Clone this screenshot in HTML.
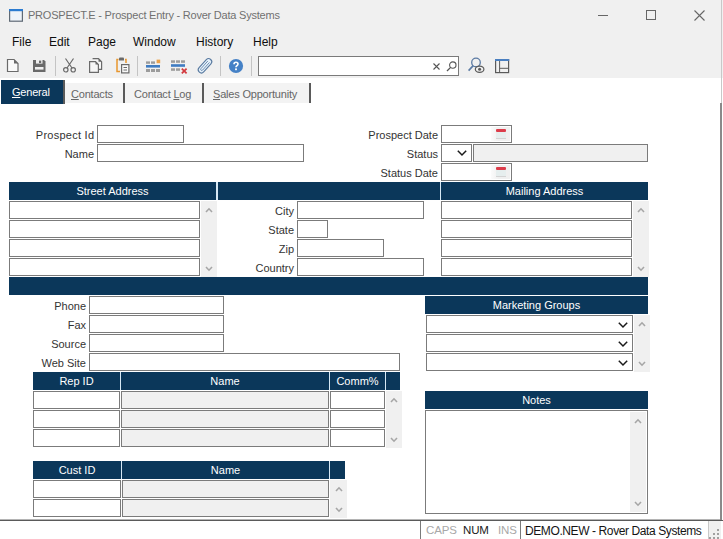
<!DOCTYPE html>
<html><head><meta charset="utf-8">
<style>
*{margin:0;padding:0;box-sizing:border-box}
html,body{width:723px;height:539px;overflow:hidden;background:#fff;font-family:"Liberation Sans",sans-serif;position:relative}
.a{position:absolute}
.t{position:absolute;white-space:nowrap;line-height:1}
.menu{font-size:12px;color:#0e0e0e;top:36px}
.sep{position:absolute;width:1px;background:#c4c4c4;top:56px;height:20px}
.tab{position:absolute;top:83px;height:20px;background:#f3f3f3}
.tabt{position:absolute;top:89px;font-size:11px;color:#666;letter-spacing:-0.2px;white-space:nowrap;line-height:1}
.tdiv{position:absolute;width:2px;background:#5a5a5a;top:83px;height:20px}
.u{text-decoration:underline;text-underline-offset:1px}
.in{position:absolute;border:1px solid #7b7b7b;background:#fff;height:18px}
.g{background:#f0f0f0}
.hd{position:absolute;background:#0b375a;height:18px;color:#fff;font-size:11px;text-align:center;line-height:18px;white-space:nowrap}
.lb{position:absolute;font-size:11px;color:#333;text-align:right;white-space:nowrap;line-height:1}
.sb{position:absolute;background:#f0f0f0}
svg{position:absolute;overflow:visible}
</style></head><body>

<div class="a" style="left:0;top:0;width:723px;height:78px;background:#f0f0f0"></div>
<svg style="left:9px;top:9px" width="14" height="13" viewBox="0 0 14 13"><rect x="0.6" y="0.6" width="12.8" height="11.6" fill="#eef3f9" stroke="#5f6a75" stroke-width="1.2"/><rect x="0" y="0" width="14" height="2.2" fill="#2b7bd0"/></svg>
<div class="t" style="left:28px;top:10px;font-size:11px;letter-spacing:-0.22px;color:#707070">PROSPECT.E - Prospect Entry - Rover Data Systems</div>
<div class="a" style="left:598px;top:15px;width:10px;height:1px;background:#666"></div>
<div class="a" style="left:646px;top:10px;width:10px;height:10px;border:1px solid #666"></div>
<svg style="left:694px;top:10px" width="11" height="11" viewBox="0 0 11 11"><path d="M0.5 0.5L10.5 10.5M10.5 0.5L0.5 10.5" stroke="#666" stroke-width="1.1"/></svg>
<div class="t menu" style="left:12px">File</div>
<div class="t menu" style="left:49px">Edit</div>
<div class="t menu" style="left:88px">Page</div>
<div class="t menu" style="left:133px">Window</div>
<div class="t menu" style="left:196px">History</div>
<div class="t menu" style="left:253px">Help</div>
<svg style="left:6px;top:58px" width="13" height="15" viewBox="0 0 13 15"><path d="M1.5 1.5H8L12 5.5V13.5H1.5Z" fill="#fafafa" stroke="#6a6a6a" stroke-width="1.2"/><path d="M8 1.5V5.5H12Z" fill="#6a6a6a"/></svg>
<svg style="left:33px;top:60px" width="13" height="12" viewBox="0 0 13 12"><path d="M0 0H11L12.5 1.5V12H0Z" fill="#6a6a6a"/><rect x="3" y="0" width="6.5" height="3.6" fill="#f0f0f0"/><rect x="6" y="0.6" width="2.2" height="2.4" fill="#6a6a6a"/><rect x="2" y="7" width="8.5" height="2.6" fill="#f0f0f0"/></svg>
<div class="sep" style="left:55px"></div>
<svg style="left:62px;top:58px" width="15" height="15" viewBox="0 0 15 15"><path d="M3.5 0.5L10 10M11.5 0.5L5 10" stroke="#6a6a6a" stroke-width="1.2" fill="none"/><circle cx="3.8" cy="11.8" r="2.2" fill="none" stroke="#6a6a6a" stroke-width="1.2"/><circle cx="11.2" cy="11.8" r="2.2" fill="none" stroke="#6a6a6a" stroke-width="1.2"/></svg>
<svg style="left:88px;top:57px" width="15" height="17" viewBox="0 0 15 17"><path d="M4.6 1.6H10.5L13.6 4.7V12.4H10.4" fill="#f6f6f6" stroke="#6a6a6a" stroke-width="1.2"/><path d="M10.5 1.6V4.7H13.6Z" fill="#6a6a6a"/><path d="M1.6 4.6H7.5L10.4 7.5V15.4H1.6Z" fill="#f6f6f6" stroke="#6a6a6a" stroke-width="1.2"/><path d="M7.5 4.6V7.5H10.4Z" fill="#6a6a6a"/></svg>
<svg style="left:115px;top:57px" width="15" height="17" viewBox="0 0 15 17"><path d="M3.5 2.5H2V14.5H5" fill="none" stroke="#e8962e" stroke-width="1.5"/><path d="M10 2.5H11V6" fill="none" stroke="#e8962e" stroke-width="1.5"/><path d="M4 3.6V1.6Q4 0.6 5 0.6H8Q9 0.6 9 1.6V3.6Z" fill="#6a6a6a"/><rect x="6.6" y="7.6" width="7.3" height="8.3" fill="#fafafa" stroke="#6a6a6a" stroke-width="1.2"/><path d="M8.5 10.5H12M8.5 13H12" stroke="#6a6a6a" stroke-width="1.1"/></svg>
<div class="sep" style="left:137px"></div>
<svg style="left:146px;top:59px" width="15" height="14" viewBox="0 0 15 14"><rect x="0" y="2.4" width="4" height="2.4" fill="#9c9c9c"/><rect x="5" y="2.4" width="4" height="2.4" fill="#9c9c9c"/><rect x="10.6" y="0.6" width="3.6" height="3.6" fill="#eba24a"/><rect x="0" y="6" width="14" height="2.6" fill="#3f7cc2"/><rect x="0" y="10" width="4" height="3" fill="#9c9c9c"/><rect x="5" y="10" width="4" height="3" fill="#9c9c9c"/><rect x="10" y="10" width="4" height="3" fill="#9c9c9c"/></svg>
<svg style="left:171px;top:60px" width="17" height="14" viewBox="0 0 17 14"><rect x="0" y="0.3" width="4" height="2.5" fill="#9c9c9c"/><rect x="5" y="0.3" width="4" height="2.5" fill="#9c9c9c"/><rect x="10" y="0.3" width="4" height="2.5" fill="#9c9c9c"/><rect x="0" y="4.2" width="14" height="2.6" fill="#3f7cc2"/><rect x="0" y="8.3" width="4" height="2.5" fill="#9c9c9c"/><rect x="5" y="8.3" width="4" height="2.5" fill="#9c9c9c"/><path d="M10.8 8.6L15.6 13.4M15.6 8.6L10.8 13.4" stroke="#d23a3f" stroke-width="1.7"/></svg>
<svg style="left:194px;top:54px" width="24" height="24" viewBox="0 0 24 24"><g transform="rotate(-48 11 11.8)"><rect x="2.5" y="8.7" width="17" height="6.2" rx="3.1" fill="#e6f1fa" stroke="#58799f" stroke-width="1.1"/><path d="M16.5 10.7H6.2A1.1 1.1 0 0 0 6.2 12.9H16.5" fill="none" stroke="#6a8bb0" stroke-width="0.9"/></g></svg>
<div class="sep" style="left:220px"></div>
<svg style="left:228px;top:58px" width="16" height="16" viewBox="0 0 16 16"><circle cx="8" cy="8" r="7.1" fill="#4581c6"/><path d="M6 6.3Q6 4.3 8 4.3Q10 4.3 10 6.1Q10 7.1 8.9 7.7Q8 8.2 8 9.3" fill="none" stroke="#fff" stroke-width="1.6"/><rect x="7.1" y="10.4" width="1.8" height="1.8" fill="#fff"/></svg>
<div class="sep" style="left:251px"></div>
<div class="a" style="left:258px;top:56px;width:201px;height:20px;border:1px solid #7a7a7a;background:#fff"></div>
<svg style="left:433px;top:63px" width="7" height="7" viewBox="0 0 7 7"><path d="M0.5 0.5L6.5 6.5M6.5 0.5L0.5 6.5" stroke="#555" stroke-width="1.1"/></svg>
<svg style="left:446px;top:61px" width="11" height="11" viewBox="0 0 11 11"><circle cx="6.8" cy="4.1" r="3.2" fill="none" stroke="#555" stroke-width="1.1"/><path d="M4.6 6.4L1 10" stroke="#555" stroke-width="1.3"/></svg>
<svg style="left:467px;top:56px" width="19" height="18" viewBox="0 0 19 18"><circle cx="9" cy="6.4" r="4.3" fill="none" stroke="#5b7aa3" stroke-width="1.3"/><path d="M6.2 9.6L1.6 14.6" stroke="#5b7aa3" stroke-width="1.6"/><ellipse cx="12.6" cy="13.3" rx="4.3" ry="3.1" fill="#f0f0f0" stroke="#5a5a5a" stroke-width="1.2"/><circle cx="12.6" cy="13.3" r="1.5" fill="#5a5a5a"/></svg>
<svg style="left:494px;top:58px" width="16" height="16" viewBox="0 0 16 16"><rect x="1.6" y="1.6" width="13" height="13" fill="none" stroke="#5a5a5a" stroke-width="1.2"/><rect x="1" y="1" width="14.2" height="2" fill="#4a7fc0"/><path d="M5.6 3V14.5M5.6 10.3H14.5" stroke="#5a5a5a" stroke-width="1"/></svg>
<div class="a" style="left:1px;top:80px;width:62px;height:24px;background:#0b375a"></div>
<div class="tabt" style="left:12px;color:#fff;top:87px"><span class="u">G</span>eneral</div>
<div class="tdiv" style="left:63px;top:80px;height:24px"></div>
<div class="tab" style="left:65px;width:58px"></div>
<div class="tabt" style="left:71px"><span class="u">C</span>ontacts</div>
<div class="tdiv" style="left:123px"></div>
<div class="tab" style="left:125px;width:78px"></div>
<div class="tabt" style="left:134px">Contact <span class="u">L</span>og</div>
<div class="tdiv" style="left:202px"></div>
<div class="tab" style="left:204px;width:106px"></div>
<div class="tabt" style="left:213px"><span class="u">S</span>ales Opportunity</div>
<div class="tdiv" style="left:309px"></div>
<div class="a" style="left:721px;top:0;width:1px;height:103px;background:#c8c8c8"></div>
<div class="a" style="left:720px;top:103px;width:2px;height:417px;background:#8a8a8a"></div>
<div class="lb" style="right:629px;top:130px"><span style="letter-spacing:0.25px">Prospect I</span>d</div>
<div class="in " style="left:97px;top:125px;width:87px;height:18px"></div>
<div class="lb" style="right:629px;top:149px">Name</div>
<div class="in " style="left:97px;top:144px;width:207px;height:18px"></div>
<div class="lb" style="right:285px;top:130px">Prospect Date</div>
<div class="in " style="left:441px;top:125px;width:71px;height:18px"></div>
<div class="a" style="left:491px;top:127px;width:19px;height:14px;background:linear-gradient(to right,#fbfbfb,#f0f0f0 40%)"></div>
<div class="a" style="left:496px;top:129px;width:10px;height:3px;background:#dc3c4a;border-radius:1px"></div>
<div class="a" style="left:496px;top:132px;width:10px;height:7px;background:#e6eeee;border-bottom:1px solid #d4d4d4"></div>
<div class="lb" style="right:285px;top:149px">Status</div>
<div class="in " style="left:441px;top:144px;width:31px;height:18px"></div>
<svg style="left:457px;top:150px" width="10" height="6" viewBox="0 0 10 6"><path d="M0.8 0.8L5 5L9.2 0.8" fill="none" stroke="#1a1a1a" stroke-width="1.5"/></svg>
<div class="in g" style="left:473px;top:144px;width:175px;height:18px"></div>
<div class="lb" style="right:285px;top:168px">Status Date</div>
<div class="in " style="left:441px;top:163px;width:71px;height:18px"></div>
<div class="a" style="left:491px;top:165px;width:19px;height:14px;background:linear-gradient(to right,#fbfbfb,#f0f0f0 40%)"></div>
<div class="a" style="left:496px;top:167px;width:10px;height:3px;background:#dc3c4a;border-radius:1px"></div>
<div class="a" style="left:496px;top:170px;width:10px;height:7px;background:#e6eeee;border-bottom:1px solid #d4d4d4"></div>
<div class="a" style="left:216px;top:182px;width:2px;height:18px;background:#d6e8f5"></div>
<div class="a" style="left:440px;top:182px;width:1px;height:18px;background:#d6e8f5"></div>
<div class="hd" style="left:9px;top:182px;width:207px">Street Address</div>
<div class="hd" style="left:218px;top:182px;width:222px"></div>
<div class="hd" style="left:441px;top:182px;width:207px">Mailing Address</div>
<div class="in " style="left:9px;top:201px;width:191px;height:18px"></div>
<div class="in " style="left:9px;top:220px;width:191px;height:18px"></div>
<div class="in " style="left:9px;top:239px;width:191px;height:18px"></div>
<div class="in " style="left:9px;top:258px;width:191px;height:18px"></div>
<div class="sb" style="left:201px;top:201px;width:16px;height:76px"></div>
<svg style="left:205.0px;top:207px" width="8" height="6" viewBox="0 0 8 6"><path d="M1 5L4 1.8L7 5" fill="none" stroke="#a6a6a6" stroke-width="1.6"/></svg>
<svg style="left:205.0px;top:266px" width="8" height="6" viewBox="0 0 8 6"><path d="M1 1L4 4.2L7 1" fill="none" stroke="#a6a6a6" stroke-width="1.6"/></svg>
<div class="lb" style="right:429px;top:206px">City</div>
<div class="in " style="left:297px;top:201px;width:127px;height:18px"></div>
<div class="lb" style="right:429px;top:225px">State</div>
<div class="in " style="left:297px;top:220px;width:31px;height:18px"></div>
<div class="lb" style="right:429px;top:244px">Zip</div>
<div class="in " style="left:297px;top:239px;width:87px;height:18px"></div>
<div class="lb" style="right:429px;top:263px">Country</div>
<div class="in " style="left:297px;top:258px;width:127px;height:18px"></div>
<div class="in " style="left:441px;top:201px;width:191px;height:18px"></div>
<div class="in " style="left:441px;top:220px;width:191px;height:18px"></div>
<div class="in " style="left:441px;top:239px;width:191px;height:18px"></div>
<div class="in " style="left:441px;top:258px;width:191px;height:18px"></div>
<div class="sb" style="left:633px;top:201px;width:16px;height:76px"></div>
<svg style="left:637.0px;top:207px" width="8" height="6" viewBox="0 0 8 6"><path d="M1 5L4 1.8L7 5" fill="none" stroke="#a6a6a6" stroke-width="1.6"/></svg>
<svg style="left:637.0px;top:266px" width="8" height="6" viewBox="0 0 8 6"><path d="M1 1L4 4.2L7 1" fill="none" stroke="#a6a6a6" stroke-width="1.6"/></svg>
<div class="hd" style="left:9px;top:277px;width:639px"></div>
<div class="lb" style="right:637px;top:301px">Phone</div>
<div class="in " style="left:89px;top:296px;width:135px;height:18px"></div>
<div class="lb" style="right:637px;top:320px">Fax</div>
<div class="in " style="left:89px;top:315px;width:135px;height:18px"></div>
<div class="lb" style="right:637px;top:339px">Source</div>
<div class="in " style="left:89px;top:334px;width:135px;height:18px"></div>
<div class="lb" style="right:637px;top:358px">Web Site</div>
<div class="in " style="left:89px;top:353px;width:311px;height:18px"></div>
<div class="a" style="left:33px;top:372px;width:367px;height:18px;background:#d6e8f5"></div>
<div class="hd" style="left:33px;top:372px;width:87px">Rep ID</div>
<div class="hd" style="left:121px;top:372px;width:208px">Name</div>
<div class="hd" style="left:330px;top:372px;width:55px">Comm%</div>
<div class="hd" style="left:386px;top:372px;width:14px"></div>
<div class="in " style="left:33px;top:391px;width:87px;height:18px"></div>
<div class="in g" style="left:121px;top:391px;width:208px;height:18px"></div>
<div class="in " style="left:330px;top:391px;width:55px;height:18px"></div>
<div class="in " style="left:33px;top:410px;width:87px;height:18px"></div>
<div class="in g" style="left:121px;top:410px;width:208px;height:18px"></div>
<div class="in " style="left:330px;top:410px;width:55px;height:18px"></div>
<div class="in " style="left:33px;top:429px;width:87px;height:18px"></div>
<div class="in g" style="left:121px;top:429px;width:208px;height:18px"></div>
<div class="in " style="left:330px;top:429px;width:55px;height:18px"></div>
<div class="sb" style="left:386px;top:391px;width:16px;height:57px"></div>
<svg style="left:390.0px;top:397px" width="8" height="6" viewBox="0 0 8 6"><path d="M1 5L4 1.8L7 5" fill="none" stroke="#a6a6a6" stroke-width="1.6"/></svg>
<svg style="left:390.0px;top:437px" width="8" height="6" viewBox="0 0 8 6"><path d="M1 1L4 4.2L7 1" fill="none" stroke="#a6a6a6" stroke-width="1.6"/></svg>
<div class="hd" style="left:425px;top:296px;width:223px">Marketing Groups</div>
<div class="in " style="left:426px;top:315px;width:207px;height:18px"></div>
<svg style="left:618px;top:322px" width="10" height="6" viewBox="0 0 10 6"><path d="M0.8 0.8L5 5L9.2 0.8" fill="none" stroke="#1a1a1a" stroke-width="1.5"/></svg>
<div class="in " style="left:426px;top:334px;width:207px;height:18px"></div>
<svg style="left:618px;top:341px" width="10" height="6" viewBox="0 0 10 6"><path d="M0.8 0.8L5 5L9.2 0.8" fill="none" stroke="#1a1a1a" stroke-width="1.5"/></svg>
<div class="in " style="left:426px;top:353px;width:207px;height:18px"></div>
<svg style="left:618px;top:360px" width="10" height="6" viewBox="0 0 10 6"><path d="M0.8 0.8L5 5L9.2 0.8" fill="none" stroke="#1a1a1a" stroke-width="1.5"/></svg>
<div class="sb" style="left:634px;top:315px;width:16px;height:57px"></div>
<svg style="left:638.0px;top:321px" width="8" height="6" viewBox="0 0 8 6"><path d="M1 5L4 1.8L7 5" fill="none" stroke="#a6a6a6" stroke-width="1.6"/></svg>
<svg style="left:638.0px;top:361px" width="8" height="6" viewBox="0 0 8 6"><path d="M1 1L4 4.2L7 1" fill="none" stroke="#a6a6a6" stroke-width="1.6"/></svg>
<div class="hd" style="left:425px;top:391px;width:223px">Notes</div>
<div class="in " style="left:425px;top:410px;width:223px;height:104px"></div>
<div class="sb" style="left:630px;top:412px;width:16px;height:100px"></div>
<svg style="left:634.0px;top:418px" width="8" height="6" viewBox="0 0 8 6"><path d="M1 5L4 1.8L7 5" fill="none" stroke="#a6a6a6" stroke-width="1.6"/></svg>
<svg style="left:634.0px;top:501px" width="8" height="6" viewBox="0 0 8 6"><path d="M1 1L4 4.2L7 1" fill="none" stroke="#a6a6a6" stroke-width="1.6"/></svg>
<div class="a" style="left:33px;top:461px;width:312px;height:18px;background:#d6e8f5"></div>
<div class="hd" style="left:33px;top:461px;width:88px">Cust ID</div>
<div class="hd" style="left:122px;top:461px;width:207px">Name</div>
<div class="hd" style="left:330px;top:461px;width:15px"></div>
<div class="in " style="left:33px;top:480px;width:88px;height:18px"></div>
<div class="in g" style="left:122px;top:480px;width:207px;height:18px"></div>
<div class="in " style="left:33px;top:499px;width:88px;height:18px"></div>
<div class="in g" style="left:122px;top:499px;width:207px;height:18px"></div>
<div class="sb" style="left:330px;top:480px;width:17px;height:38px"></div>
<svg style="left:334.5px;top:486px" width="8" height="6" viewBox="0 0 8 6"><path d="M1 5L4 1.8L7 5" fill="none" stroke="#a6a6a6" stroke-width="1.6"/></svg>
<svg style="left:334.5px;top:507px" width="8" height="6" viewBox="0 0 8 6"><path d="M1 1L4 4.2L7 1" fill="none" stroke="#a6a6a6" stroke-width="1.6"/></svg>
<div class="a" style="left:0;top:519px;width:720px;height:1px;background:#b4b4b4"></div>
<div class="a" style="left:0;top:520px;width:723px;height:19px;background:#fff;border-top:1px solid #5a5a5a"></div>
<div class="a" style="left:708px;top:521px;width:13px;height:18px;background:#f0f0f0"></div>
<div class="a" style="left:420px;top:521px;width:1px;height:18px;background:#7a7a7a"></div>
<div class="t" style="left:426px;font-size:11.5px;letter-spacing:-0.15px;top:525px;color:#a8a8a8">CAPS</div>
<div class="t" style="left:463px;font-size:11.5px;letter-spacing:-0.15px;top:525px;color:#1a1a1a">NUM</div>
<div class="t" style="left:498px;font-size:11.5px;letter-spacing:-0.15px;top:525px;color:#a8a8a8">INS</div>
<div class="a" style="left:520px;top:521px;width:1px;height:18px;background:#7a7a7a"></div>
<div class="t" style="left:525px;font-size:12px;letter-spacing:-0.4px;top:525px;color:#141414">DEMO.NEW - Rover Data Systems</div>
<div class="a" style="left:708px;top:521px;width:1px;height:18px;background:#c8c8c8"></div>
<div class="a" style="left:717px;top:529px;width:2px;height:2px;background:#a0a0a0"></div>
<div class="a" style="left:717px;top:533px;width:2px;height:2px;background:#a0a0a0"></div>
<div class="a" style="left:713px;top:533px;width:2px;height:2px;background:#a0a0a0"></div>
<div class="a" style="left:717px;top:537px;width:2px;height:2px;background:#a0a0a0"></div>
<div class="a" style="left:713px;top:537px;width:2px;height:2px;background:#a0a0a0"></div>
<div class="a" style="left:709px;top:537px;width:2px;height:2px;background:#a0a0a0"></div>
</body></html>
